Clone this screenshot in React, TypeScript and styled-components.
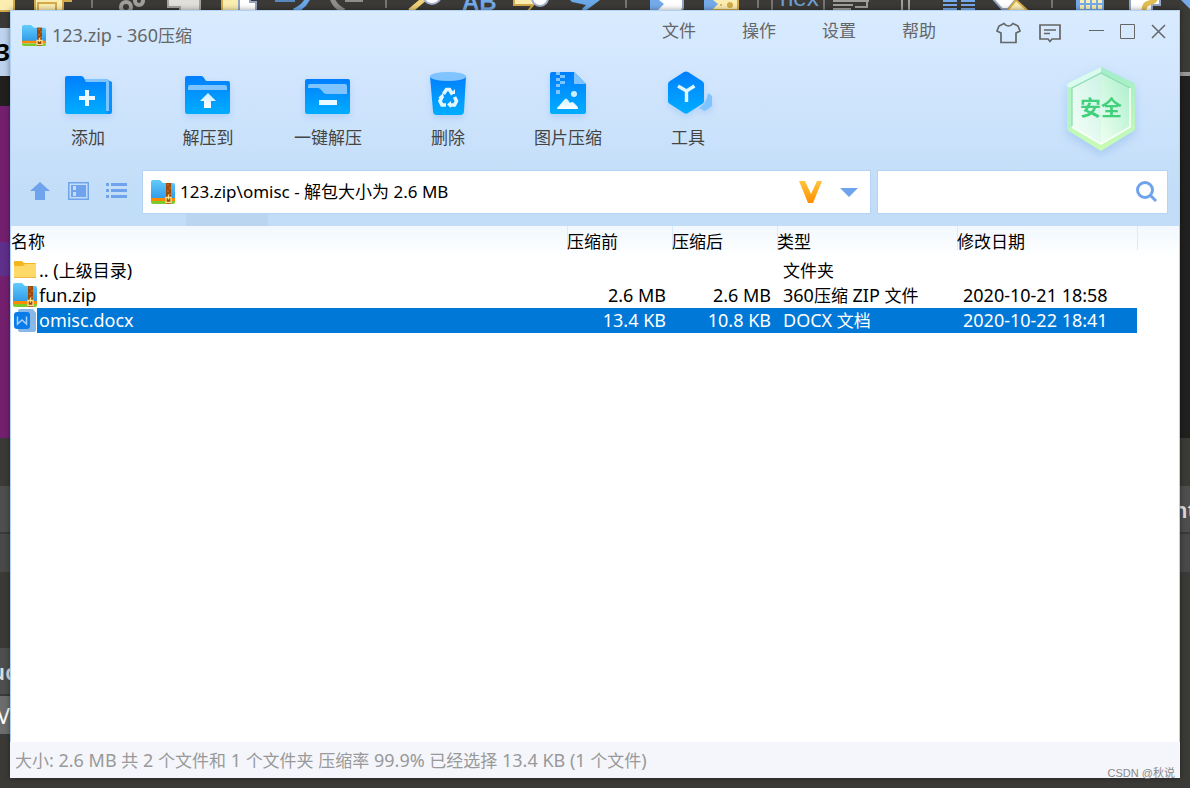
import React from "react";
import styled, { createGlobalStyle, css } from "styled-components";

const GlobalStyle = createGlobalStyle`
  * { box-sizing: border-box; }
  body {
    margin: 0;
    background: #3c3a36;
    font-family: "Noto Sans", "Noto Sans CJK SC", sans-serif;
    font-size: 17px;
    line-height: 24px;
    color: #000;
  }
  button, input { font: inherit; color: inherit; }
`;

const Desktop = styled.div`
  display: grid;
  grid-template-columns: 10px minmax(0, 1fr) 10px;
  grid-template-rows: 10px minmax(0, 1fr) 10px;
  min-height: 100vh;
`;

const TopStrip = styled.div`
  grid-column: 1 / -1;
  overflow: hidden;
  svg { display: block; }
`;

const SideStrip = styled.div`
  display: flex;
  flex-direction: column;
  overflow: hidden;
`;

const Segment = styled.div<{ $h: number; $c: string; $end?: boolean }>`
  height: ${(p) => p.$h}px;
  flex: none;
  background: ${(p) => p.$c};
  display: flex;
  align-items: center;
  justify-content: ${(p) => (p.$end ? "flex-end" : "center")};
  overflow: hidden;
  color: #ddd;
  font-size: 22px;
  font-weight: 600;
`;

const DigitSegment = styled(Segment)`
  color: #000;
  font-size: 24px;
  font-weight: 700;
`;

const LetterSegment = styled(Segment)`
  color: #fff;
  font-weight: 400;
`;

const Window = styled.main`
  display: flex;
  flex-direction: column;
  min-width: 0;
  background: #fff;
  position: relative;
  box-shadow: 0 0 6px rgba(0, 0, 0, 0.4);
`;

const Body = styled.div`
  flex: 1;
  display: flex;
  flex-direction: column;
  border: 1px solid #b2d2f3;
  border-bottom: 0;
`;

const Header = styled.header`
  background: linear-gradient(#d8ebff 0, #d0e5fd 80px, #c2ddf8 185px, #c2ddf8 100%);
`;

const TitleBar = styled.div`
  display: flex;
  height: 48px;
  padding: 0 12px 0 11px;
  align-items: center;
`;

const Title = styled.h1`
  margin: 0 auto 0 6px;
  font-size: 17px;
  font-weight: 400;
  color: #666;
`;

const Latin = styled.span`
  font-size: 18px;
`;

const Menu = styled.nav`
  display: flex;
  margin: 0 37px 8px 0;
`;

const MenuItem = styled.button`
  width: 80px;
  padding: 0;
  border: 0;
  background: none;
  color: #666;
`;

const WindowTools = styled.div`
  display: flex;
  align-items: center;
  gap: 18px;
  margin: 0 28px 4px 0;
`;

const Captions = styled.div`
  display: flex;
  gap: 15px;
  margin-bottom: 6px;
`;

const IconButton = styled.button`
  display: flex;
  flex: none;
  padding: 0;
  border: 0;
  background: none;
`;

const Toolbar = styled.div`
  display: flex;
  height: 111px;
  padding: 9px 43px 0 17px;
`;

const Tool = styled.button`
  width: 120px;
  height: 82px;
  display: flex;
  flex-direction: column;
  align-items: center;
  justify-content: space-between;
  padding: 0;
  border: 0;
  background: none;
  color: #444;
  svg { filter: drop-shadow(0 3px 3px rgba(90, 150, 230, 0.25)); }
`;

const Safety = styled.div`
  margin: -2px 0 0 auto;
  svg { display: block; filter: drop-shadow(0 4px 5px rgba(90, 150, 230, 0.3)); }
`;

const AddressRow = styled.div`
  display: flex;
  align-items: center;
  gap: 6px;
  padding: 0 11px 0 18px;
`;

const NavButtons = styled.div`
  display: flex;
  gap: 16px;
  margin-right: 9px;
`;

const Field = styled.div<{ $width?: number }>`
  ${(p) => (p.$width ? css`flex: 0 0 ${p.$width}px;` : css`flex: 1;`)}
  min-width: 0;
  height: 44px;
  display: flex;
  align-items: center;
  padding: 0 8px;
  background: #fff;
  border: 1px solid #b5d4f3;
`;

const FieldInput = styled.input`
  flex: 1;
  min-width: 0;
  padding: 0 0 0 5px;
  border: 0;
  outline: 0;
  background: none;
`;

const FieldIcons = styled.div`
  display: flex;
  align-items: center;
  gap: 18px;
  padding-right: 4px;
`;

const TabShelf = styled.div`
  height: 12px;
  padding-left: 175px;
`;

const TabShade = styled.div`
  width: 82px;
  height: 12px;
  background: #b9d5ef;
`;

const FileTable = styled.table`
  width: 100%;
  table-layout: fixed;
  border-collapse: collapse;
`;

const HeadCell = styled.th<{ $width?: number }>`
  ${(p) => p.$width && css`width: ${p.$width}px;`}
  height: 32px;
  padding: 0;
  text-align: left;
  font-weight: 400;
  background: linear-gradient(90deg, #dcebfa 1px, transparent 1px) 0 0 / 100% 24px no-repeat,
    linear-gradient(#f1f8fe, #ffffff);
  &:first-child { background: linear-gradient(#f1f8fe, #ffffff); }
`;

const Cell = styled.td<{ $right?: boolean; $selected?: boolean }>`
  height: 25px;
  padding: 0 6px;
  white-space: nowrap;
  text-align: ${(p) => (p.$right ? "right" : "left")};
  ${(p) => p.$selected && css`background: #0078d7; color: #fff;`}
`;

const NameCell = styled.td`
  height: 25px;
  padding: 0;
`;

const NameLine = styled.div`
  display: flex;
  height: 25px;
  line-height: 25px;
  padding-left: 2px;
  svg { flex: none; }
`;

const FileName = styled.span<{ $selected?: boolean }>`
  flex: 1;
  padding-left: 2px;
  ${(p) => p.$selected && css`background: #0078d7; color: #fff;`}
`;

const StatusBar = styled.footer`
  height: 36px;
  padding: 6px 5px;
  background: #f4f6fb;
  color: #999;
`;

const Watermark = styled.span`
  position: absolute;
  right: 5px;
  bottom: -3px;
  font-family: "Liberation Sans", "Noto Sans CJK SC", sans-serif;
  font-size: 11px;
  line-height: 16px;
  color: #888;
`;

// Sets the non-Chinese runs of a text one size larger than the Chinese ones.
const Mixed = ({ text }: { text: string }) => (
  <>
    {text.split(/([\u4e00-\u9fff]+)/).map((run, i) =>
      i % 2 ? run : run && <Latin key={i}>{run}</Latin>
    )}
  </>
);

const ZipIcon = ({ h = 24 }: { h?: number }) => (
  <svg width="24" height={h} viewBox="0 0 24 24" preserveAspectRatio="none" aria-hidden="true">
    <defs>
      <linearGradient id="zipBlue" x1="0" y1="0" x2="0" y2="1">
        <stop offset="0" stopColor="#63cbfb" />
        <stop offset="1" stopColor="#2f9ae9" />
      </linearGradient>
    </defs>
    <path d="M0 19V2q0-2 2-2h7l3 3h10q2 0 2 2v14z" fill="url(#zipBlue)" />
    <path d="M0 18h24v3H0z" fill="#ff8a00" />
    <path d="M0 21h24v1q0 2-2 2H2q-2 0-2-2z" fill="#7ccb2a" />
    <path d="M15 3h5v21h-5z" fill="#9c4a0c" />
    <path d="M16 5h2M18 8h2M16 11h2M18 14h2" stroke="#e2701a" strokeWidth="1" />
    <path d="M15 17.500h5v5h-5zM17.500 14.500v5" fill="none" stroke="#ffe08a" strokeWidth="1.300" />
  </svg>
);

const BlueGradient = ({ id }: { id: string }) => (
  <defs>
    <linearGradient id={id} x1="0" y1="0" x2="0" y2="1">
      <stop offset="0" stopColor="#007fff" />
      <stop offset="1" stopColor="#00adff" />
    </linearGradient>
    <linearGradient id={id + "w"} x1="0" y1="0" x2="0" y2="1">
      <stop offset="0" stopColor="#c9f0ff" />
      <stop offset="1" stopColor="#fff" />
    </linearGradient>
  </defs>
);

const ToolIcon = ({ id, children }: { id: string; children: React.ReactNode }) => (
  <svg width="48" height="48" viewBox="0 0 48 48" aria-hidden="true">
    <BlueGradient id={id} />
    {children}
  </svg>
);

const tools = [
  {
    label: "添加",
    icon: (
      <ToolIcon id="add">
        <path d="M22 11h20l6 3v30q0 2-3 2H30z" fill="#0793ff" />
        <path d="M20 11h22q3 0 3 3v29h-3V14H22z" fill="#7fc3ff" />
        <path d="M1 10q0-2 2-2h14q2 0 3 2l2 4h18q2 0 2 2v26q0 4 2 4H3q-2 0-2-2z" fill="url(#add)" />
        <path d="M23 22v16M15 30h16" stroke="#eaf9ff" strokeWidth="4" />
      </ToolIcon>
    ),
  },
  {
    label: "解压到",
    icon: (
      <ToolIcon id="to">
        <path d="M1 10q0-2 2-2h14q2 0 3 2l2 3h22q2 0 2 2v29q0 2-2 2H3q-2 0-2-2z" fill="url(#to)" />
        <path d="M4 22v-3q0-2 2-2h35q2 0 2 2v3z" fill="#7fc3ff" />
        <path d="M24 25l8 8h-5v7h-7v-7h-4z" fill="url(#tow)" />
      </ToolIcon>
    ),
  },
  {
    label: "一键解压",
    icon: (
      <ToolIcon id="one">
        <path d="M1 13q0-2 2-2h41q2 0 2 2v31q0 2-2 2H3q-2 0-2-2z" fill="url(#one)" />
        <path d="M4 20v-2q0-2 2-2h35q2 0 2 2v8H22q-2 0-4-3t-4-3z" fill="#7fc3ff" />
        <path d="M15 34.500h18" stroke="#eaf9ff" strokeWidth="5" />
      </ToolIcon>
    ),
  },
  {
    label: "删除",
    icon: (
      <ToolIcon id="del">
        <path d="M6 8h36l-2 35q0 4-4 4H13q-4 0-4-4z" fill="url(#del)" />
        <ellipse cx="24" cy="8.500" rx="18" ry="4.500" fill="#7fc3ff" />
        <g fill="none" stroke="#e4f7ff" strokeWidth="3.600">
          <path d="M19.500 26l3-4.500h3l3 5" />
          <path d="M30.500 29l2 4-2 4h-5" />
          <path d="M22 37h-4l-2-4 2-4" />
        </g>
        <path d="M26 26h5v-5zM27 33v7l-4-3.500zM14 30h6l-1-5z" fill="#e4f7ff" />
      </ToolIcon>
    ),
  },
  {
    label: "图片压缩",
    icon: (
      <ToolIcon id="img">
        <path d="M6 6q0-2 2-2h22l12 12v28q0 2-2 2H8q-2 0-2-2z" fill="url(#img)" />
        <path d="M30 4l12 12H30z" fill="#7fc3ff" />
        <path d="M12 4h4v3h-4zM16 7h5v3h-5zM12 10h4v3h-4zM16 13h5v3h-5zM12 16h4v3h-4zM12 22h4v4h-4z" fill="#7fc3ff" />
        <path d="M13 41q0-2 2-3l5-6q2-3 4 0l2 3q2-2 4 0l3 3q1 1 1 3z" fill="url(#imgw)" />
        <circle cx="30" cy="26" r="3" fill="#c9f0ff" />
      </ToolIcon>
    ),
  },
  {
    label: "工具",
    icon: (
      <ToolIcon id="util">
        <path d="M44 25l4 3v10l-7 5-6-3q7-4 9-14z" fill="#7fc3ff" />
        <path d="M22 4q2-1 4 0l14 9q2 1 2 3v17q0 2-2 3l-14 9q-2 1-4 0L8 36q-2-1-2-3V16q0-2 2-3z" fill="url(#util)" transform="translate(-2 0)" />
        <path d="M14 18l8.500 5 8-5M22.500 22v12" fill="none" stroke="#ddf6ff" strokeWidth="3.400" />
      </ToolIcon>
    ),
  },
];

const SafeBadge = () => (
  <svg width="70" height="86" viewBox="0 0 70 86" role="img" aria-label="安全">
    <defs>
      <linearGradient id="rim" x1="0" y1="0" x2="0" y2="1">
        <stop offset="0" stopColor="#a2edcb" />
        <stop offset="1" stopColor="#c9fcb5" />
      </linearGradient>
      <linearGradient id="faceL" x1="1" y1="0" x2="0" y2="1">
        <stop offset="0" stopColor="#cdf3e6" />
        <stop offset="1" stopColor="#f6fff8" />
      </linearGradient>
      <linearGradient id="faceR" x1="1" y1="0" x2="0" y2="1">
        <stop offset="0" stopColor="#a9efcb" />
        <stop offset="1" stopColor="#effff0" />
      </linearGradient>
    </defs>
    <path d="M35 1L68 17q1 1 1 3v44L35 85 1 64V20q0-2 1-3z" fill="url(#rim)" />
    <path d="M35 1L2 17q-1 1-1 4l6 1L35 7z" fill="#dcfbf0" />
    <path d="M1 64V22l5 1v38z" fill="#b3f5c7" />
    <path d="M35 7L6 22v39l29 17z" fill="url(#faceL)" />
    <path d="M35 7l29 15v39L35 78z" fill="url(#faceR)" />
    <path d="M6 60V22L35 7l29 15" fill="none" stroke="#8fdcb2" strokeWidth="1.300" />
    <path d="M64 22v39L35 78 6 61" fill="none" stroke="#fbfff6" strokeWidth="1.600" />
    <text x="35" y="49" textAnchor="middle" fontSize="21" fontWeight="700" fill="#41d17c" fontFamily='"Noto Sans CJK SC", sans-serif'>
      安全
    </text>
  </svg>
);

const FolderIcon = () => (
  <svg width="24" height="25" viewBox="0 0 24 25" aria-hidden="true">
    <path d="M1 4q0-1 1-1h6q1 0 2 1l1 1h11q1 0 1 1v5H1z" fill="#f3b61f" />
    <path d="M1 8h9l2-2h11v13q0 1-1 1H2q-1 0-1-1z" fill="#ffd968" />
    <path d="M1 19.500h22" stroke="#f0b940" />
  </svg>
);

const DocIcon = () => (
  <svg width="24" height="25" viewBox="0 0 24 25" aria-hidden="true">
    <path d="M7 1h13l3 4v17q0 2-2 2H7q-2 0-2-2V3q0-2 2-2z" fill="#87b8e8" />
    <rect x="1" y="4" width="16" height="17" rx="3" fill="#0b7be8" />
    <path d="M4.500 8.500V16l4.500-4 4.500 4V8.500" fill="none" stroke="#a4d2ff" strokeWidth="1.500" />
  </svg>
);

const BackgroundToolbar = () => (
  <svg width="1190" height="10" viewBox="0 0 1190 10" aria-hidden="true">
    <g fill="#fbedb0" stroke="#d4ab4a" strokeWidth="2">
      <path d="M-2-2h16v14H-2zM35-2h28v14H35z" />
      <path d="M38 12V3h17M63 1h9M56 2v8" fill="none" />
      <path d="M222-2h16v14h-16z" stroke="none" />
      <path d="M222-2v14" />
    </g>
    <g fill="none" stroke="#a09f9b" strokeWidth="4">
      <circle cx="126" cy="7" r="5" />
      <circle cx="139" cy="1" r="4" />
    </g>
    <path d="M168-2h32v14h-20V7h-12z" fill="#e0dfda" stroke="#a5a49f" strokeWidth="2" />
    <path d="M239-2h11v4h6v10h-17z" fill="#fff" stroke="#93a5c5" strokeWidth="2" />
    <path d="M275 0h20v2h-20z" fill="#5787bd" />
    <path d="M308-2Q304 7 294 11" fill="none" stroke="#6aa8e6" strokeWidth="5" />
    <path d="M332-2Q335 7 344 11" fill="none" stroke="#8f8e8a" strokeWidth="5" />
    <path d="M345 0h18v2h-18z" fill="#8f8e8a" />
    <path d="M410 11L424-1" stroke="#f0d077" strokeWidth="5" />
    <circle cx="432" cy="-5" r="9" fill="#fff" stroke="#a5b0cc" strokeWidth="2" />
    <text x="462" y="10" fontSize="24" fontWeight="700" fill="#75aaea" fontFamily='"Liberation Sans", sans-serif'>AB</text>
    <path d="M514-1h24L528 11l5-6h-19z" fill="#fbedb0" stroke="#d4ab4a" strokeWidth="2" />
    <circle cx="540" cy="-2" r="8" fill="#fff" stroke="#a5b0cc" strokeWidth="2" />
    <path d="M570 0h30L584 12l-2-3 4-4-14-3z" fill="#6aa8e6" />
    <path d="M651-2h32v10l-2 4h-30z" fill="#fff" stroke="#93a5c5" strokeWidth="2" />
    <path d="M650 0h9l5 4-6 6h-8z" fill="#75aaea" />
    <path d="M706-2h32v12h-32z" fill="#fbedb0" stroke="#d4ab4a" strokeWidth="2" />
    <path d="M704 0h9l5 4-6 6h-8z" fill="#75aaea" />
    <circle cx="730" cy="5" r="3" fill="#d4ab4a" />
    <circle cx="721" cy="5" r="1" fill="#d4ab4a" />
    <text x="780" y="6" fontSize="24" fill="#6f9fd0" fontFamily='"Liberation Sans", sans-serif'>nex</text>
    <g stroke="#777672" strokeWidth="2">
      <path d="M92-1v9M386-1v9M626-1v9M758-1v9M772-1v11M824-1v11M1052-1v9" />
      <path d="M833 1h36M833 5h20M833 9h18M867 0v7h-12" stroke="#a09f9b" fill="none" />
      <path d="M902-1v11M909-1v11" stroke="#a09f9b" />
      <path d="M943 1h14M943 5h14M943 9h14M961 1h14M961 5h14M961 9h14" stroke="#75aaea" />
    </g>
    <path d="M993-1l9 10h6l8-10z" fill="#fff" stroke="#93a5c5" strokeWidth="2" />
    <path d="M1007 11l9-11 12 11z" fill="#fbedb0" stroke="#d4ab4a" strokeWidth="2" />
    <path d="M1076-2h28v14h-28z" fill="#75aaea" />
    <path d="M1080 0h4v3h-4zM1086 0h4v3h-4zM1092 0h4v3h-4zM1098 0h4v3h-4zM1080 5h4v4h-4zM1086 5h4v4h-4zM1092 5h4v4h-4zM1098 5h4v4h-4z" fill="#fbedb0" />
    <path d="M1130-2h30v7h-8v8h-22z" fill="#fff" stroke="#93a5c5" strokeWidth="2" />
    <path d="M1156-2q-2 4-7 5-5 1-5 8" fill="none" stroke="#e2bd52" strokeWidth="5" />
    <path d="M1181 0h9v9z" fill="#75aaea" />
  </svg>
);

type FileRow = {
  name: string;
  icon: React.ReactNode;
  before: string;
  after: string;
  type: string;
  date: string;
  selected?: boolean;
};

const files: FileRow[] = [
  { name: ".. (上级目录)", icon: <FolderIcon />, before: "", after: "", type: "文件夹", date: "" },
  { name: "fun.zip", icon: <ZipIcon />, before: "2.6 MB", after: "2.6 MB", type: "360压缩 ZIP 文件", date: "2020-10-21 18:58" },
  { name: "omisc.docx", icon: <DocIcon />, before: "13.4 KB", after: "10.8 KB", type: "DOCX 文档", date: "2020-10-22 18:41", selected: true },
];

const dark = "#3c3a36";

export default function App() {
  return (
    <>
      <GlobalStyle />
      <Desktop>
        <TopStrip>
          <BackgroundToolbar />
        </TopStrip>
        <SideStrip>
          <Segment $h={2} $c="#d4ab4a" />
          <Segment $h={16} $c={dark} />
          <DigitSegment $h={48} $c="#bdd2ec" $end>3</DigitSegment>
          <Segment $h={30} $c="#21201e" />
          <Segment $h={136} $c="#75206f" />
          <Segment $h={34} $c="#5f2f8c" />
          <Segment $h={162} $c="#75206f" />
          <Segment $h={48} $c={dark} />
          <Segment $h={46} $c="#4e4e4e" />
          <Segment $h={2} $c={dark} />
          <Segment $h={38} $c="#494949" />
          <Segment $h={76} $c={dark} />
          <Segment $h={46} $c="#4e4e4e">ud</Segment>
          <Segment $h={2} $c={dark} />
          <LetterSegment $h={38} $c="#6d6d6d" $end>V</LetterSegment>
        </SideStrip>
        <Window>
          <Body>
            <Header>
              <TitleBar>
                <ZipIcon h={21} />
                <Title>
                  <Mixed text="123.zip - 360压缩" />
                </Title>
                <Menu>
                  <MenuItem>文件</MenuItem>
                  <MenuItem>操作</MenuItem>
                  <MenuItem>设置</MenuItem>
                  <MenuItem>帮助</MenuItem>
                </Menu>
                <WindowTools>
                  <IconButton aria-label="皮肤">
                    <svg width="25" height="22" viewBox="0 0 25 22" fill="none" stroke="#666" strokeWidth="1.700">
                      <path d="M8 1.500L3 4 1 9l4 2v9.500h15V11l4-2-2-5-5-2.500Q15 4 12.500 4T8 1.500z" />
                    </svg>
                  </IconButton>
                  <IconButton aria-label="反馈">
                    <svg width="22" height="20" viewBox="0 0 22 20" fill="none" stroke="#666" strokeWidth="1.700">
                      <path d="M1 2h20v14h-8l-2 2.500L9 16H1zM5 7h12M5 10.500h6" />
                    </svg>
                  </IconButton>
                </WindowTools>
                <Captions>
                  <IconButton aria-label="最小化">
                    <svg width="16" height="16" viewBox="0 0 16 16" stroke="#666">
                      <path d="M0 6.500h15" />
                    </svg>
                  </IconButton>
                  <IconButton aria-label="最大化">
                    <svg width="16" height="16" viewBox="0 0 16 16" fill="none" stroke="#666">
                      <path d="M.5.500h14v14H.5z" />
                    </svg>
                  </IconButton>
                  <IconButton aria-label="关闭">
                    <svg width="16" height="16" viewBox="0 0 16 16" stroke="#666" strokeWidth="1.500">
                      <path d="M1 1l13 13M14 1L1 14" />
                    </svg>
                  </IconButton>
                </Captions>
              </TitleBar>
              <Toolbar>
                {tools.map((t) => (
                  <Tool key={t.label}>
                    {t.icon}
                    {t.label}
                  </Tool>
                ))}
                <Safety>
                  <SafeBadge />
                </Safety>
              </Toolbar>
              <AddressRow>
                <NavButtons>
                  <IconButton aria-label="上一级">
                    <svg width="22" height="22" viewBox="0 0 22 22" fill="#6fa3ec">
                      <path d="M11 1l10 9h-5v9H6v-9H1z" />
                    </svg>
                  </IconButton>
                  <IconButton aria-label="预览">
                    <svg width="22" height="22" viewBox="0 0 22 22" fill="#6fa3ec">
                      <path d="M1 1h21v18H1zM2.500 2.500v15h18v-15z" fillRule="evenodd" />
                      <path d="M4 4h15v12H4zM6 5v4h3V5zM6 11v4h3v-4z" fillRule="evenodd" />
                    </svg>
                  </IconButton>
                  <IconButton aria-label="列表">
                    <svg width="22" height="22" viewBox="0 0 22 22" fill="#6fa3ec">
                      <path d="M1 2h3v3H1zM1 8h3v3H1zM1 14h3v3H1zM6 2h16v3H6zM6 8h16v3H6zM6 14h16v3H6z" />
                    </svg>
                  </IconButton>
                </NavButtons>
                <Field>
                  <ZipIcon />
                  <FieldInput aria-label="路径" defaultValue={"123.zip\\omisc - 解包大小为 2.6 MB"} />
                  <FieldIcons>
                    <svg width="23" height="22" viewBox="0 0 23 22" aria-hidden="true">
                      <defs>
                        <linearGradient id="vip" x1="0" y1="0" x2="0" y2="1">
                          <stop offset="0" stopColor="#ffc53d" />
                          <stop offset="1" stopColor="#ff8f00" />
                        </linearGradient>
                      </defs>
                      <path d="M0 0h6l6 13 6-13h5l-9 22H9z" fill="url(#vip)" />
                    </svg>
                    <IconButton aria-label="历史路径">
                      <svg width="18" height="9" viewBox="0 0 18 9">
                        <path d="M0 0h18L9 9z" fill="#6fa3ec" />
                      </svg>
                    </IconButton>
                  </FieldIcons>
                </Field>
                <Field $width={291}>
                  <FieldInput aria-label="搜索" />
                  <IconButton aria-label="搜索文件">
                    <svg width="24" height="24" viewBox="0 0 24 24" fill="none" stroke="#6fa3ec">
                      <circle cx="10" cy="10" r="7.500" strokeWidth="3" />
                      <path d="M15 15l6 6" strokeWidth="3" />
                    </svg>
                  </IconButton>
                </Field>
              </AddressRow>
              <TabShelf>
                <TabShade />
              </TabShelf>
            </Header>
            <FileTable>
              <thead>
                <tr>
                  <HeadCell>名称</HeadCell>
                  <HeadCell $width={105}>压缩前</HeadCell>
                  <HeadCell $width={105}>压缩后</HeadCell>
                  <HeadCell $width={180}>类型</HeadCell>
                  <HeadCell $width={180}>修改日期</HeadCell>
                  <HeadCell $width={42} aria-hidden="true" />
                </tr>
              </thead>
              <tbody>
                {files.map((f) => (
                  <tr key={f.name}>
                    <NameCell>
                      <NameLine>
                        {f.icon}
                        <FileName $selected={f.selected}>
                          <Mixed text={f.name} />
                        </FileName>
                      </NameLine>
                    </NameCell>
                    <Cell $right $selected={f.selected}><Mixed text={f.before} /></Cell>
                    <Cell $right $selected={f.selected}><Mixed text={f.after} /></Cell>
                    <Cell $selected={f.selected}><Mixed text={f.type} /></Cell>
                    <Cell $selected={f.selected}><Mixed text={f.date} /></Cell>
                    <td />
                  </tr>
                ))}
              </tbody>
            </FileTable>
          </Body>
          <StatusBar>
            <Mixed text="大小: 2.6 MB 共 2 个文件和 1 个文件夹 压缩率 99.9% 已经选择 13.4 KB (1 个文件)" />
          </StatusBar>
          <Watermark>CSDN @秋说</Watermark>
        </Window>
        <SideStrip>
          <Segment $h={62} $c={dark} />
          <Segment $h={4} $c="#999" />
          <Segment $h={362} $c="#21201e" />
          <Segment $h={48} $c={dark} />
          <Segment $h={46} $c="#4e4e4e">nt</Segment>
          <Segment $h={2} $c={dark} />
          <Segment $h={38} $c="#494949" />
        </SideStrip>
      </Desktop>
    </>
  );
}
